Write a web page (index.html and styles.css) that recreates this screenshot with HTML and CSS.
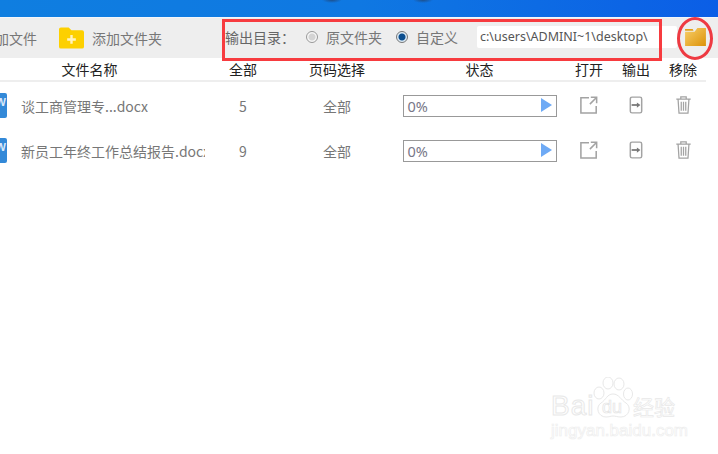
FILE: index.html
```html
<!DOCTYPE html>
<html lang="zh">
<head>
<meta charset="utf-8">
<title>输出目录</title>
<link rel="stylesheet" href="styles.css">
</head>
<body>
<div class="page">
  <div class="topbar"></div>
  <div class="toolbar">
    <span class="add-file">添加文件</span>
    <span class="add-folder">
      <svg class="folder-add" width="25" height="22" viewBox="0 0 26 22"><path d="M0 2a2 2 0 0 1 2-2h8l3 3h11a2 2 0 0 1 2 2v15a2 2 0 0 1-2 2H2a2 2 0 0 1-2-2z" fill="#fdd000"/><path d="M13 8v9M8.500 12.500h9" stroke="#fff3c0" stroke-width="2.500"/></svg>
      <span>添加文件夹</span>
    </span>
    <span class="out-label">输出目录：</span>
    <label class="radio"><i class="dot"></i>原文件夹</label>
    <label class="radio"><i class="dot on"></i>自定义</label>
    <span class="path">c:\users\ADMINI~1\desktop\</span>
    <svg class="folder-browse" width="21" height="18" viewBox="0 0 22 19"><defs><linearGradient id="fg" x1="0" y1="0" x2="1" y2="1"><stop offset="0" stop-color="#f8cf6a"/><stop offset="1" stop-color="#dc9208"/></linearGradient></defs><path d="M0 1h8l1 2H0z" fill="#e2a018"/><path d="M0 4h10l3-4h9v19H0z" fill="url(#fg)"/></svg>
  </div>
  <div class="grid header">
    <span>文件名称</span><span>全部</span><span>页码选择</span><span>状态</span><span>打开</span><span>输出</span><span>移除</span>
  </div>
  <div class="grid row">
    <div class="name"><i class="doc"><b>W</b></i><span class="fname">谈工商管理专...docx</span></div>
    <span>5</span><span class="page-sel">全部</span>
    <div class="status"><span>0%</span><i class="play"></i></div>
    <svg class="ic" width="18" height="18" viewBox="0 0 20 20"><path d="M10 2H1v17h17v-8M12 1.500h6.500V8M18 2l-7 7" fill="none" stroke="#a3a3a3" stroke-width="1.700"/></svg>
    <svg class="ic" width="14" height="18" viewBox="0 0 16 20"><rect x="1.500" y="1" width="13" height="18" rx="2" fill="none" stroke="#a3a3a3" stroke-width="1.700"/><path d="M3 10h7" stroke="#777" stroke-width="2"/><path d="M9 7l4 3-4 3z" fill="#777"/></svg>
    <svg class="ic" width="15" height="18" viewBox="0 0 16 20"><path d="M0 3.500h16M5 3V1h6v2M2 4l1 15h10l1-15M5.500 6.500v10M8 6.500v10M10.500 6.500v10" fill="none" stroke="#a3a3a3" stroke-width="1.400"/></svg>
  </div>
  <div class="grid row">
    <div class="name"><i class="doc"><b>W</b></i><span class="fname">新员工年终工作总结报告.docx</span></div>
    <span>9</span><span class="page-sel">全部</span>
    <div class="status"><span>0%</span><i class="play"></i></div>
    <svg class="ic" width="18" height="18" viewBox="0 0 20 20"><path d="M10 2H1v17h17v-8M12 1.500h6.500V8M18 2l-7 7" fill="none" stroke="#a3a3a3" stroke-width="1.700"/></svg>
    <svg class="ic" width="14" height="18" viewBox="0 0 16 20"><rect x="1.500" y="1" width="13" height="18" rx="2" fill="none" stroke="#a3a3a3" stroke-width="1.700"/><path d="M3 10h7" stroke="#777" stroke-width="2"/><path d="M9 7l4 3-4 3z" fill="#777"/></svg>
    <svg class="ic" width="15" height="18" viewBox="0 0 16 20"><path d="M0 3.500h16M5 3V1h6v2M2 4l1 15h10l1-15M5.500 6.500v10M8 6.500v10M10.500 6.500v10" fill="none" stroke="#a3a3a3" stroke-width="1.400"/></svg>
  </div>
  <div class="mark-rect"></div>
  <div class="mark-oval"></div>
  <div class="watermark">
    <span class="wm-bai">Bai</span>
    <svg class="wm-paw" width="40" height="41" viewBox="0 0 40 41"><g fill="#fff" stroke="#e8e8e8" stroke-width="1"><ellipse cx="6" cy="16" rx="5" ry="6"/><ellipse cx="15" cy="6" rx="5" ry="6"/><ellipse cx="26" cy="7" rx="5" ry="6"/><ellipse cx="35" cy="17" rx="4.500" ry="6"/><path d="M20 17c-6 0-7 6-12 9-6 4-3 14 5 14 3 0 5-1 7-1s5 1 8 1c8 0 11-10 5-14-5-3-7-9-13-9z"/></g></svg>
    <span class="wm-du">du</span>
    <span class="wm-cn">经验</span>
    <span class="wm-url">jingyan.baidu.com</span>
  </div>
</div>
</body>
</html>
```
FILE: styles.css
```css
* { box-sizing: border-box; }
html, body { margin: 0; padding: 0; background: #fff; }
.page {
  position: relative;
  width: 718px;
  height: 454px;
  overflow: hidden;
  font-family: "Noto Sans CJK SC", "Liberation Sans", sans-serif;
  font-size: 14px;
  color: #777;
}
.topbar {
  height: 17px;
  background:
    radial-gradient(ellipse 10px 3px at 332px 0, #1d4f8c 0, rgba(29, 79, 140, 0) 100%),
    radial-gradient(ellipse 10px 3px at 423px 0, #1d4f8c 0, rgba(29, 79, 140, 0) 100%),
    linear-gradient(90deg, #0f7ee0 0%, #0f78e2 50%, #0b5ee6 100%);
}
.toolbar {
  height: 41px;
  background: #eee;
  display: flex;
  align-items: center;
  border-top: 1px solid #f2f6fb;
  white-space: nowrap;
}
.add-file { margin-left: -19px; width: 78px; flex: none; }
.add-folder { display: flex; align-items: center; gap: 8px; width: 166px; flex: none; }
.folder-add { flex: none; }
.out-label { width: 81px; flex: none; color: #666; position: relative; top: -1px; }
.radio { display: flex; align-items: center; gap: 8px; flex: none; position: relative; top: -1px; }
.radio:nth-of-type(1) { width: 90px; }
.radio:nth-of-type(2) { width: 81px; }
.dot {
  width: 12px; height: 12px; border-radius: 50%;
  border: 1px solid #999;
  background: radial-gradient(circle, #d4d4d4 0 3px, #f6f6f6 4px);
}
.dot.on { background: radial-gradient(circle, #0d4f8f 0 3px, #dcebf6 4px); border-color: #777; }
.path {
  width: 200px; height: 22px; flex: none;
  background: #fff; border-radius: 2px;
  padding-left: 3px;
  line-height: 22px;
  font-family: "Noto Sans", sans-serif;
  font-size: 12.500px;
  color: #555;
  position: relative; top: -1px;
}
.folder-browse { flex: none; margin-left: 8px; position: relative; top: -1px; }
.grid {
  display: grid;
  grid-template-columns: 205px 76px 112px 173px 46px 48px 46px;
  width: 706px;
  align-items: center;
  justify-items: center;
}
.header {
  height: 24px;
  border-bottom: 2px solid #eee;
  color: #222;
}
.header span:first-child { margin-right: 26px; }
.row { height: 45px; }
.header + .row { margin-top: 1px; }
.name { display: flex; align-items: center; width: 205px; justify-self: start; overflow: hidden; white-space: nowrap; }
.doc {
  width: 14px; height: 25px; margin-left: -7px; margin-right: 14px; flex: none;
  background: #3389d8; border-radius: 2px;
  color: #dbeafa; font-style: normal; font-size: 11px; line-height: 18px; text-align: right;
  padding-right: 1px;
  font-family: "Liberation Sans", sans-serif;
}
.doc b { font-weight: 700; }
.fname { overflow: hidden; }
.status {
  width: 154px; height: 22px;
  border: 1px solid #999;
  display: flex; align-items: center; justify-content: space-between;
  padding: 0 4px;
  font-family: "Noto Sans", sans-serif;
  font-size: 14.500px;
  color: #778;
}
.play {
  width: 0; height: 0;
  border-left: 11px solid #6eaaf5;
  border-top: 7px solid transparent;
  border-bottom: 7px solid transparent;
  margin-top: -1px;
}
.ic { margin-top: -1px; }
.mark-rect {
  position: absolute; left: 222px; top: 19px;
  width: 440px; height: 42px;
  border: 3px solid #f73b3f;
}
.mark-oval {
  position: absolute; left: 677px; top: 17px;
  width: 36px; height: 43px;
  border: 3px solid #ee3a42;
  border-radius: 50%;
}
.watermark {
  position: absolute; left: 548px; top: 372px;
  width: 165px; height: 72px;
  color: #fff;
  -webkit-text-stroke: 1px #e8e8e8;
  font-family: "Liberation Sans", sans-serif;
}
.wm-bai { position: absolute; left: 3px; top: 18px; font-size: 28px; letter-spacing: 1px; }
.wm-paw { position: absolute; left: 45px; top: 5px; }
.wm-du { position: absolute; left: 54px; top: 25px; font-size: 18px; -webkit-text-stroke: 0.700px #e4e4e4; }
.wm-cn { position: absolute; left: 85px; top: 19px; font-size: 21px; font-family: "Noto Sans CJK SC", sans-serif; -webkit-text-stroke: 0.700px #e8e8e8; white-space: nowrap; }
.wm-url { position: absolute; left: 3px; top: 49px; font-size: 17px; white-space: nowrap; -webkit-text-stroke: 0.700px #eeeeee; }
```
